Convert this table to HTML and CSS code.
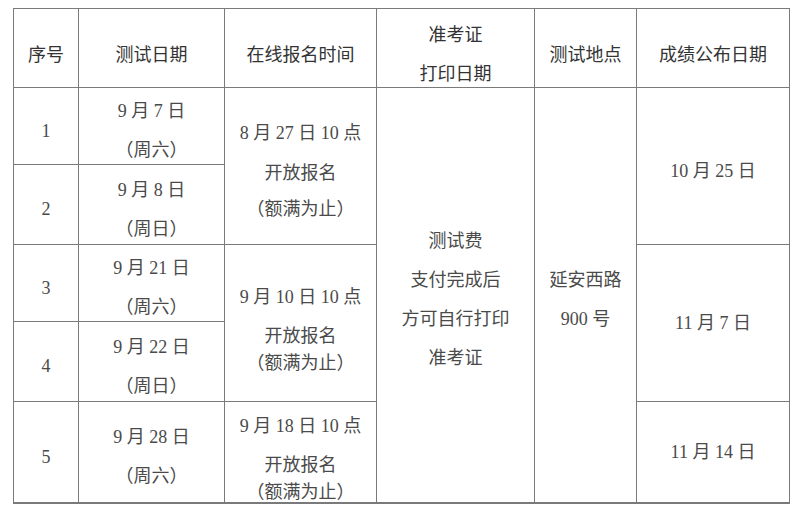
FILE: index.html
```html
<!DOCTYPE html>
<html lang="zh">
<head>
<meta charset="utf-8">
<title>测试安排</title>
<link rel="stylesheet" href="styles.css">
</head>
<body>
<div class="table">
  <div class="cell head c1"><div class="ln">序号</div></div>
  <div class="cell head c2"><div class="ln">测试日期</div></div>
  <div class="cell head c3"><div class="ln">在线报名时间</div></div>
  <div class="cell head c4"><div class="ln">准考证</div><div class="ln">打印日期</div></div>
  <div class="cell head c5"><div class="ln">测试地点</div></div>
  <div class="cell head c6"><div class="ln">成绩公布日期</div></div>

  <div class="cell c1"><div class="ln">1</div></div>
  <div class="cell c2"><div class="ln">9 月 7 日</div><div class="ln">（周六）</div></div>
  <div class="cell c3 span2 reg-a"><div class="ln">8 月 27 日 10 点</div><div class="ln mid">开放报名</div><div class="ln last">（额满为止）</div></div>
  <div class="cell c4 span5"><div class="ln">测试费</div><div class="ln">支付完成后</div><div class="ln">方可自行打印</div><div class="ln">准考证</div></div>
  <div class="cell c5 span5"><div class="ln">延安西路</div><div class="ln">900 号</div></div>
  <div class="cell c6 span2"><div class="ln">10 月 25 日</div></div>

  <div class="cell c1"><div class="ln">2</div></div>
  <div class="cell c2"><div class="ln">9 月 8 日</div><div class="ln">（周日）</div></div>

  <div class="cell c1"><div class="ln">3</div></div>
  <div class="cell c2"><div class="ln">9 月 21 日</div><div class="ln">（周六）</div></div>
  <div class="cell c3 span2 reg-b"><div class="ln">9 月 10 日 10 点</div><div class="ln">开放报名</div><div class="ln tight">（额满为止）</div></div>
  <div class="cell c6 span2 flat"><div class="ln">11 月 7 日</div></div>

  <div class="cell c1"><div class="ln">4</div></div>
  <div class="cell c2"><div class="ln">9 月 22 日</div><div class="ln">（周日）</div></div>

  <div class="cell c1"><div class="ln">5</div></div>
  <div class="cell c2"><div class="ln">9 月 28 日</div><div class="ln">（周六）</div></div>
  <div class="cell c3 reg-b"><div class="ln">9 月 18 日 10 点</div><div class="ln">开放报名</div><div class="ln tight">（额满为止）</div></div>
  <div class="cell c6 flat"><div class="ln">11 月 14 日</div></div>
</div>
</body>
</html>
```

FILE: styles.css
```css
html, body {
  margin: 0;
  background: #ffffff;
}

body {
  padding: 8px 0 0 13px;
  font-family: "Liberation Serif", "Noto Sans CJK SC", serif;
  font-size: 18px;
  color: #4a4a4a;
}

.table {
  display: inline-grid;
  grid-template-columns: 64px 145px 151px 157px 101px 152px;
  grid-template-rows: 78px 76px 79px 76px 79px 100px;
  gap: 1px;
  padding: 1px 1px 2px 1px;
  background: #7a7a7a;
}

.cell {
  background: #ffffff;
  display: flex;
  flex-direction: column;
  align-items: center;
  justify-content: center;
  text-align: center;
  padding-top: 10px;
  box-sizing: border-box;
  overflow: hidden;
}

.ln {
  line-height: 39px;
  white-space: nowrap;
}

.head {
  font-family: "Noto Sans CJK SC", "Liberation Sans", sans-serif;
  color: #333333;
}

.c1 { grid-column: 1; }
.c2 { grid-column: 2; }
.c3 { grid-column: 3; }
.c4 { grid-column: 4; }
.c5 { grid-column: 5; }
.c6 { grid-column: 6; }

.span2 { grid-row: span 2; }
.span5 { grid-row: span 5; }

.reg-a .mid { margin-top: 1px; }
.reg-a .last { margin-top: -3px; }

.reg-b { padding-top: 14px; }
.reg-b .tight { margin-top: -12px; }

.flat { padding-top: 0; }
```
